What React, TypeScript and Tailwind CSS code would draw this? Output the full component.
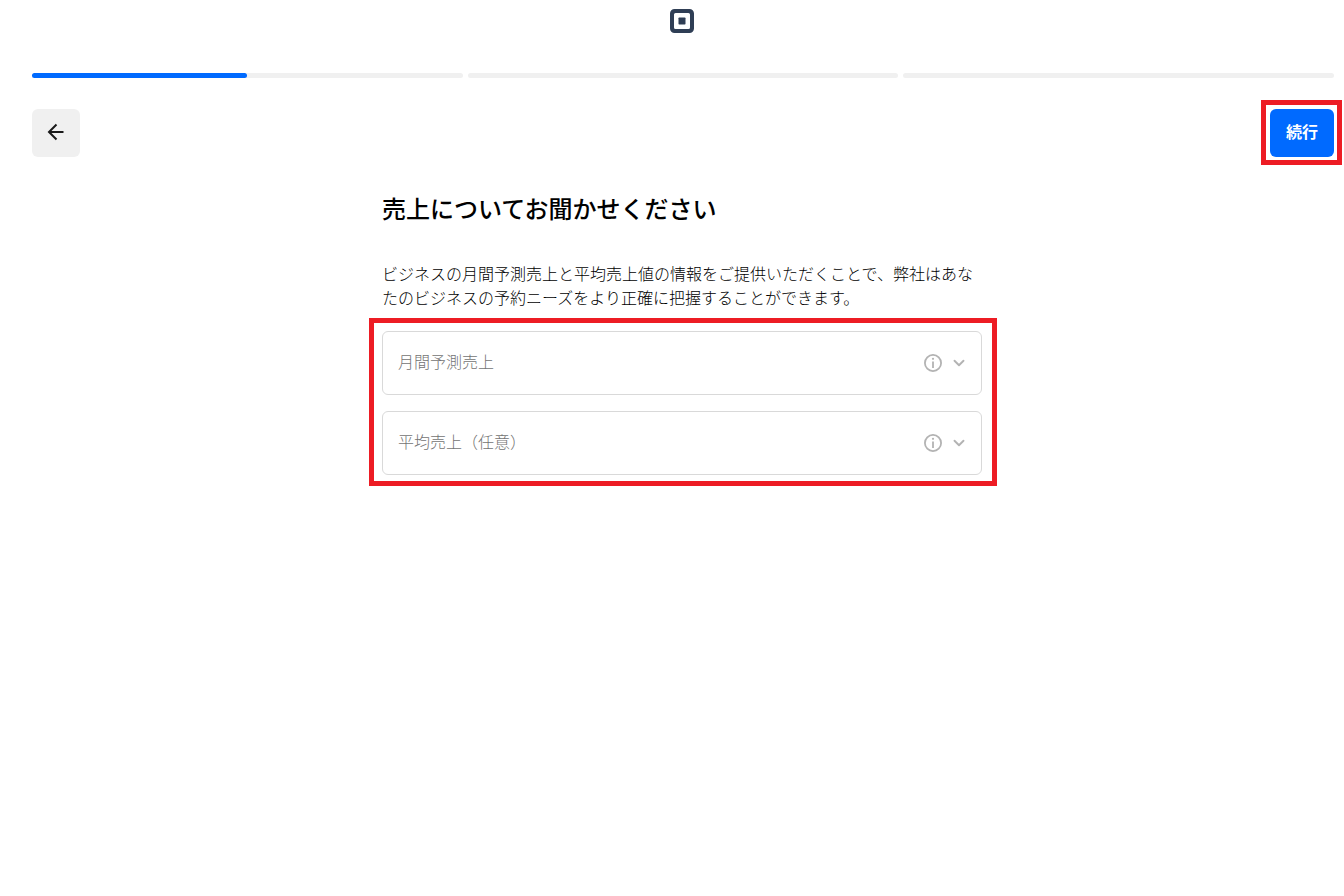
import { ChevronDown } from "lucide-react";

const fontStack = "font-['Inter','Noto_Sans_CJK_JP',sans-serif]";

function SquareLogo() {
  return (
    <svg width="24" height="24" viewBox="0 0 24 24" className="block">
      <path
        fillRule="evenodd"
        fill="#2f3e55"
        d="M4.500 0h15A4.500 4.500 0 0 1 24 4.500v15a4.500 4.500 0 0 1-4.500 4.500h-15A4.500 4.500 0 0 1 0 19.500v-15A4.500 4.500 0 0 1 4.500 0zM5.500 4A1.500 1.500 0 0 0 4 5.500v13A1.500 1.500 0 0 0 5.500 20h13a1.500 1.500 0 0 0 1.500-1.500v-13A1.500 1.500 0 0 0 18.500 4z"
      />
      <rect x="8.500" y="8.500" width="7" height="7" rx="0.700" fill="#2f3e55" />
    </svg>
  );
}

function BackArrow() {
  return (
    <svg width="24" height="24" viewBox="0 0 24 24" fill="none" stroke="currentColor" strokeWidth="2">
      <path d="M19.500 11H5.500" />
      <path d="M12.500 3.500L5 11l7.500 7.500" />
    </svg>
  );
}

function InfoIcon() {
  return (
    <svg width="20" height="20" viewBox="0 0 20 20" fill="none" stroke="currentColor" strokeWidth="1.800">
      <circle cx="10" cy="10" r="8.100" />
      <path d="M10 8.500v6.500" />
      <circle cx="10" cy="5.800" r="1.100" fill="currentColor" stroke="none" />
    </svg>
  );
}

function SelectField({ label }: { label: string }) {
  return (
    <div className="flex h-16 items-center justify-between rounded-md border border-[#d9d9d9] bg-white pl-[15px] pr-[13px]">
      <span className="pb-[2px] text-base font-light text-[#737373]">{label}</span>
      <div className="flex items-center gap-[7px] text-[#b3b3b3]">
        <InfoIcon />
        <ChevronDown size={18} strokeWidth={2.500} />
      </div>
    </div>
  );
}

function ProgressBar() {
  return (
    <div className="mt-[40px] flex gap-[5px] pl-8 pr-[10px]">
      <div className="h-[5px] flex-1 rounded-full bg-[#f0f0f0]">
        <div className="h-[5px] w-1/2 rounded-full bg-[#006aff]" />
      </div>
      <div className="h-[5px] flex-1 rounded-full bg-[#f0f0f0]" />
      <div className="h-[5px] flex-1 rounded-full bg-[#f0f0f0]" />
    </div>
  );
}

export default function App() {
  return (
    <div className={`min-h-[896px] bg-white text-black ${fontStack}`}>
      <header className="flex justify-center pt-[9px] pl-5">
        <SquareLogo />
      </header>
      <ProgressBar />

      <div className="mt-[31px] flex items-center justify-between pl-8 pr-[10px]">
        <button className="flex h-12 w-12 items-center justify-center rounded-md bg-[#f0f0f0] text-[#1a1a1a]">
          <BackArrow />
        </button>
        <div className="relative">
          <button className="flex h-12 w-16 items-center justify-center rounded-md bg-[#006aff] pb-[2px] text-base font-bold text-white">
            続行
          </button>
          <div className="pointer-events-none absolute -top-[9px] -left-[9px] h-[65px] w-[81px] border-[5px] border-[#ed1c24]" />
        </div>
      </div>

      <div className="flex justify-center pl-5">
        <main className="mt-[37px] w-[600px]">
          <h1 className="text-2xl leading-8 font-medium text-black">売上についてお聞かせください</h1>
          <p className="mt-[36px] text-base leading-6 font-light text-black">
            ビジネスの月間予測売上と平均売上値の情報をご提供いただくことで、弊社はあなたのビジネスの予約ニーズをより正確に把握することができます。
          </p>
          <div className="relative mt-[21px] flex flex-col gap-4">
            <SelectField label="月間予測売上" />
            <SelectField label="平均売上（任意）" />
            <div className="pointer-events-none absolute -top-[13px] -right-[15px] -bottom-[11px] -left-[13px] border-[5px] border-[#ed1c24]" />
          </div>
        </main>
      </div>
    </div>
  );
}
